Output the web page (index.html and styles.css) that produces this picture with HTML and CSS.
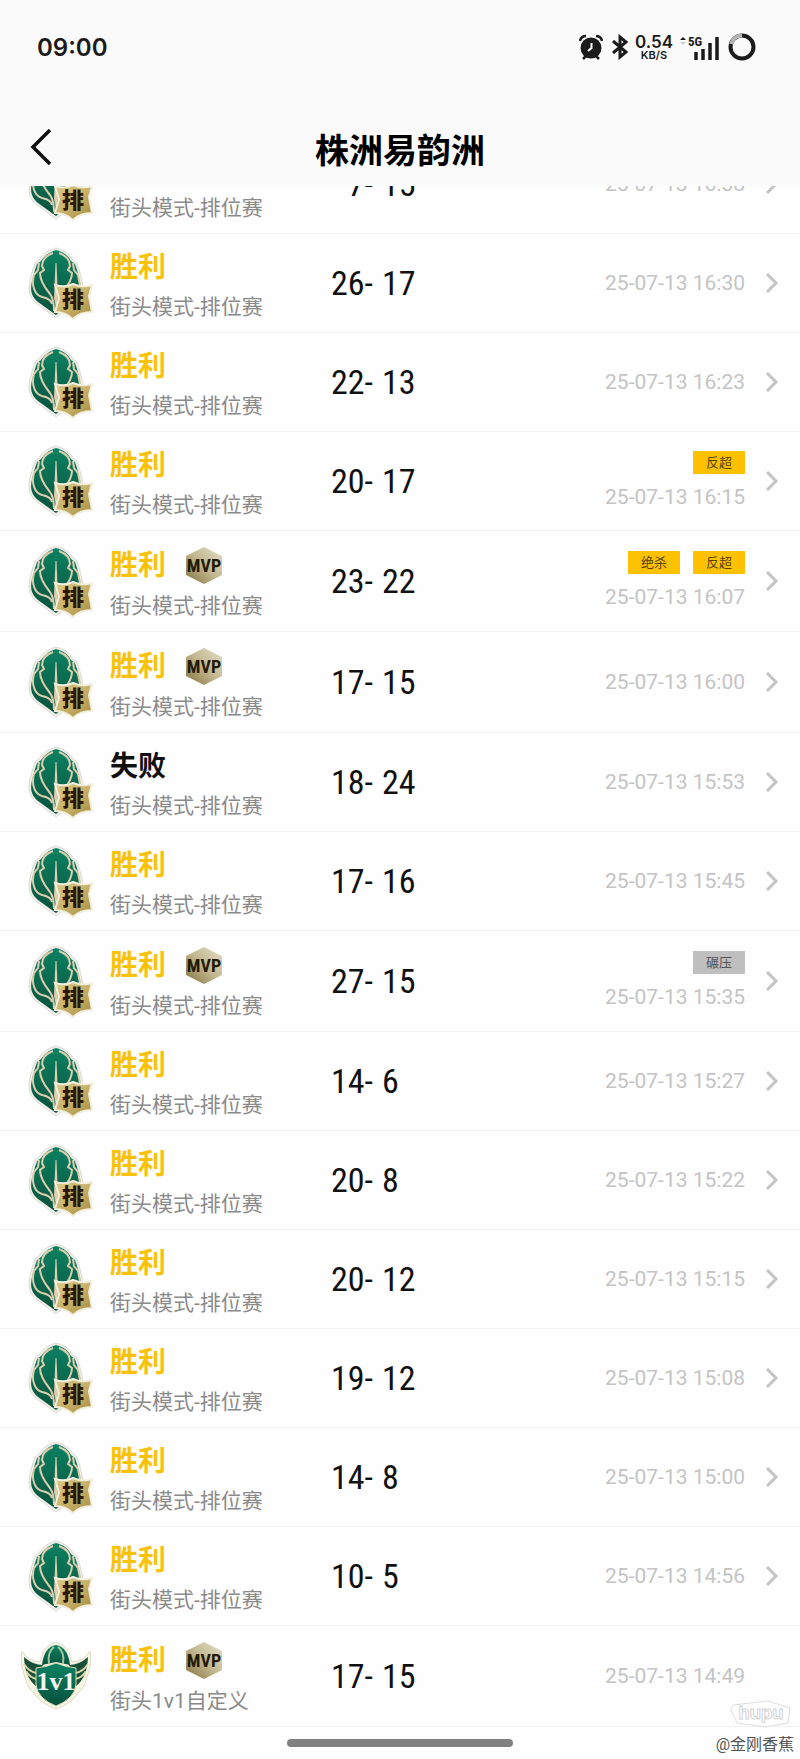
FILE: index.html
```html
<!DOCTYPE html>
<html lang="zh-CN">
<head>
<meta charset="utf-8">
<meta name="viewport" content="width=device-width, initial-scale=1">
<title>株洲易韵洲</title>
<link rel="stylesheet" href="styles.css">
</head>
<body>
<svg class="sprite" aria-hidden="true">
  <defs>
    <linearGradient id="gold" x1="0" y1="0" x2="1" y2="1">
      <stop offset="0" stop-color="#dccb8c"/><stop offset=".5" stop-color="#c9b269"/><stop offset="1" stop-color="#a38a3e"/>
    </linearGradient>
    <linearGradient id="medal" x1="0" y1="1" x2="1" y2="0">
      <stop offset="0" stop-color="#85713a"/><stop offset=".5" stop-color="#c2b78f"/><stop offset="1" stop-color="#e6e0cb"/>
    </linearGradient>
    <linearGradient id="green" x1="0" y1="0" x2="0" y2="1">
      <stop offset="0" stop-color="#0c8262"/><stop offset="1" stop-color="#07513c"/>
    </linearGradient>
    <symbol id="ranked" viewBox="0 0 74 74">
      <path d="M37 2C45 4 51 8 54 14L58 17 60 23 63 35C65 46 63 52 58 56L37 72 17 57C10 51 9 44 11 34L14 23 16 17 20 14C24 7 30 4 37 2Z" fill="#f0efe8" stroke="#dbdad3"/>
      <path d="M37 4C44 6 49 9 52 15L56 18 58 24 61 36C63 45 61 51 56 55L37 69 19 56C12 50 11 44 13 35L16 24 18 18 22 15C26 9 31 6 37 4Z" fill="url(#green)"/>
      <g fill="none" stroke="#dccdae" stroke-width="2">
        <path d="M34 7C26 10 23 15 23 20L25 24 21 27C21 36 27 43 31 48C34 52 35 58 35 65"/>
        <path d="M20 17L19 24 15 29C12 40 16 49 23 51C29 52 32 54 33 58"/>
        <path d="M40 7C48 10 51 15 51 20L49 24 53 27C53 34 48 41 44 46"/>
        <path d="M54 17L55 24 59 29L61 39"/>
      </g>
      <path d="M36.500 17L35 52L37 62L39 52L37.500 17Z" fill="#dccdae"/>
      <path d="M36 39Q46 42 54 38Q63 42 73 39L70 50 73 66Q61 66 54 73Q46 66 36 66L40 52Z" fill="url(#gold)" stroke="#f3efe0" stroke-width="2"/>
      <text x="54" y="61" class="ranked-text">排</text>
    </symbol>
    <symbol id="duel" viewBox="0 0 74 74">
      <path d="M37 3Q46 6 50 13L53 23Q64 23 71 12Q73 25 69 35Q65 50 60 53Q52 65 37 70Q22 65 14 53Q9 50 5 35Q1 25 3 12Q10 23 21 23L24 13Q28 6 37 3Z" fill="#f7f5e4" stroke="#dedbc6"/>
      <path d="M5 18Q14 26 24 26L22 31 17 29V47Q6 39 5 18ZM69 18Q60 26 50 26L52 31 57 29V47Q68 39 69 18Z" fill="#174f38"/>
      <path d="M5 25Q10 33 18 34M7 32Q11 39 18 40M69 25Q64 33 56 34M67 32Q63 39 56 40" fill="none" stroke="#ddd6a8" stroke-width="2"/>
      <path d="M23 26Q25 8 37 6Q49 8 51 26L37 23Z" fill="url(#green)"/>
      <path d="M30 25Q28 13 35 8M44 25Q46 13 39 8" fill="none" stroke="#a7c5a0" stroke-width="2"/>
      <path d="M17 29Q28 28 37 24Q46 28 57 29V46Q55 60 37 67Q19 60 17 46Z" fill="url(#green)" stroke="#ded8b2" stroke-width="1"/>
      <text x="37" y="51" class="duel-text">1v1</text>
    </symbol>
    <symbol id="mvp" viewBox="0 0 36 39">
      <path d="M18 1L36 10V29L18 38L0 29V10Z" fill="url(#medal)"/>
      <text x="18" y="26" class="mvp-text">MVP</text>
    </symbol>
    <symbol id="next" viewBox="0 0 14 20">
      <path d="M2 1L11 10L2 19" fill="none" stroke="#c4c4c4" stroke-width="3"/>
    </symbol>
  </defs>
</svg>

<header class="header">
  <div class="status">
    <time class="clock">09:00</time>
    <div class="indicators">
      <svg class="alarm" viewBox="0 0 24 26" aria-label="闹钟"><circle cx="12" cy="14" r="10.5" fill="#1b1b1b"/><path d="M1 7Q2 2 7 2M17 2Q22 2 23 7M7 22L4 25M17 22L20 25" fill="none" stroke="#1b1b1b" stroke-width="2.5"/><path d="M12.500 9V14L9 17" fill="none" stroke="#fff" stroke-width="2"/></svg>
      <svg class="bluetooth" viewBox="0 0 16 26" aria-label="蓝牙"><path d="M1 7L14 18L8 23V3L14 8L1 19" fill="none" stroke="#1b1b1b" stroke-width="3"/></svg>
      <div class="speed"><b>0.54</b><small>KB/S</small></div>
      <svg class="signal" viewBox="0 0 39 26" aria-label="5G"><path d="M0 6L3 3L6 6Z" fill="#1b1b1b"/><path d="M0 8H6L3 11Z" fill="#ccc"/><path d="M16 26V18M23 26V15M30 26V9M37 26V3" fill="none" stroke="#1b1b1b" stroke-width="3.500"/><text x="8" y="12" class="network">5G</text></svg>
      <svg class="battery" viewBox="0 0 28 28" aria-label="电量"><circle cx="14" cy="14" r="11.500" fill="none" stroke="#1b1b1b" stroke-width="4"/><path d="M3 11A11.500 11.500 0 0 1 14 2.500" fill="none" stroke="#b5b5b5" stroke-width="4"/></svg>
    </div>
  </div>
  <div class="nav">
    <button class="back" aria-label="返回"><svg viewBox="0 0 22 36"><path d="M20 1L3 18L20 35" fill="none" stroke="#111" stroke-width="3.500"/></svg></button>
    <h1>株洲易韵洲</h1>
  </div>
</header>

<main class="matches" id="matches"></main>

<div class="home-bar"></div>
<div class="watermark">
  <svg viewBox="0 0 62 28" aria-hidden="true"><path d="M3 5L38 1L60 8L58 23L36 27L7 23L1 10Z" fill="#fff" stroke="#ddd"/><text x="31" y="19" class="brand">hupu</text></svg>
  <span>@金刚香蕉</span>
</div>
<script src="matches.js"></script>
</body>
</html>
```
FILE: styles.css
```css
* { box-sizing: border-box; }

body {
  margin: 0;
  position: relative;
  min-height: 100vh;
  padding-bottom: 31px;
  overflow-x: hidden;
  background: #fefefe;
  color: #111;
  font-family: Roboto, "Noto Sans CJK SC", sans-serif;
}

.sprite { position: absolute; width: 0; height: 0; }

.header {
  position: sticky;
  top: 0;
  z-index: 1;
  height: 186px;
  background: #fafafa;
}

.status {
  display: flex;
  align-items: center;
  justify-content: space-between;
  height: 94px;
  padding: 0 44px 0 37px;
  color: #1b1b1b;
  font-family: Inter, sans-serif;
}

.clock { font-size: 24px; font-weight: 600; }

.indicators { display: flex; align-items: center; gap: 7px; }
.alarm { width: 24px; height: 26px; }
.bluetooth { width: 16px; height: 26px; margin-left: 2px; }
.speed { display: flex; flex-direction: column; align-items: center; }
.speed b { font-size: 17px; line-height: 16px; font-weight: 600; }
.speed small { font-size: 11px; line-height: 11px; font-weight: 600; }
.signal { width: 39px; height: 26px; }
.network { font: 700 13px "Liberation Sans Narrow", "Roboto Condensed", Roboto, sans-serif; fill: #1b1b1b; }
.battery { width: 28px; height: 28px; margin-left: 2px; }

.nav {
  display: grid;
  grid-template-columns: 100px 1fr 100px;
  align-items: center;
  height: 92px;
  padding-top: 22px;
}

.nav h1 {
  margin: 0;
  font-size: 34px;
  line-height: 36px;
  font-weight: 700;
  text-align: center;
  color: #000;
}

.back {
  width: 60px;
  height: 36px;
  margin: 0 0 8px 22px;
  padding: 0 8px;
  border: 0;
  background: none;
  text-align: left;
}

.back svg { width: 22px; height: 36px; }

.matches { overflow: hidden; }

.match {
  display: grid;
  grid-template-columns: 91px 219px 1fr auto 14px;
  align-items: center;
  padding: 0 21px 0 19px;
  border-bottom: 1px solid #f2f2f2;
}

.match:first-child { margin-top: -51px; }

.mode-icon { display: block; width: 74px; height: 74px; }
.ranked-text { font: 900 22px "Noto Sans CJK SC", sans-serif; fill: #2c180b; text-anchor: middle; }
.duel-text { font: 700 26px "Liberation Serif", serif; fill: #f2f5f0; text-anchor: middle; }

.info { padding: 17px 0 10px; }
.outcome { display: flex; align-items: center; gap: 20px; margin-bottom: 7px; }

.outcome h2 {
  margin: 0;
  font-size: 28px;
  line-height: 34px;
  font-weight: 700;
  color: #f9c20a;
}

.outcome .lost { color: #111; }
.medal { width: 36px; height: 39px; margin: -2px 0 -1px; }
.mvp-text { font: 700 18px "Liberation Sans Narrow", "Roboto Condensed", Roboto, sans-serif; fill: #241a08; text-anchor: middle; }

.mode {
  margin: 0;
  font-size: 21px;
  line-height: 30px;
  font-weight: 400;
  color: #8a8a8a;
}

.score {
  display: flex;
  gap: 9px;
  font-family: "Liberation Sans Narrow", "Roboto Condensed", Roboto, sans-serif;
  font-size: 34px;
  line-height: 36px;
}

.score span:first-child { min-width: 44px; text-align: right; }

.when {
  display: flex;
  flex-direction: column;
  align-items: flex-end;
  gap: 8px;
  padding: 18px 0;
  margin-right: 20px;
}

.tags { display: flex; gap: 13px; }

.tag {
  width: 52px;
  background: #fcc202;
  color: #57430a;
  font-size: 13px;
  line-height: 23px;
  text-align: center;
}

.tag-gray { background: #bfbfbf; color: #555; }

.when time {
  font-size: 21px;
  line-height: 30px;
  font-weight: 400;
  color: #c4c4c4;
}

.next { display: block; width: 14px; height: 20px; }

.home-bar {
  position: absolute;
  bottom: 12px;
  left: 50%;
  width: 226px;
  height: 8px;
  margin-left: -113px;
  border-radius: 4px;
  background: #808080;
}

.watermark {
  position: absolute;
  right: 6px;
  bottom: 4px;
  display: flex;
  flex-direction: column;
  align-items: flex-end;
  gap: 7px;
  font-size: 16px;
  line-height: 20px;
  color: #555;
}

.watermark svg { width: 62px; height: 28px; margin-right: 2px; }
.brand { font: 700 18px Inter, sans-serif; fill: #fff; stroke: #d4d4d4; text-anchor: middle; }
```
FILE: matches.js
```js
const matches = [
  { own: 7, other: 15, time: "16:38", won: true },
  { own: 26, other: 17, time: "16:30", won: true },
  { own: 22, other: 13, time: "16:23", won: true },
  { own: 20, other: 17, time: "16:15", won: true, tags: ["反超"] },
  { own: 23, other: 22, time: "16:07", won: true, mvp: true, tags: ["绝杀", "反超"] },
  { own: 17, other: 15, time: "16:00", won: true, mvp: true },
  { own: 18, other: 24, time: "15:53", won: false },
  { own: 17, other: 16, time: "15:45", won: true },
  { own: 27, other: 15, time: "15:35", won: true, mvp: true, tags: ["碾压"] },
  { own: 14, other: 6, time: "15:27", won: true },
  { own: 20, other: 8, time: "15:22", won: true },
  { own: 20, other: 12, time: "15:15", won: true },
  { own: 19, other: 12, time: "15:08", won: true },
  { own: 14, other: 8, time: "15:00", won: true },
  { own: 10, other: 5, time: "14:56", won: true },
  { own: 17, other: 15, time: "14:49", won: true, mvp: true, duel: true }
];

const renderTags = tags => `<div class="tags">${tags
  .map(tag => `<span class="tag${tag === "碾压" ? " tag-gray" : ""}">${tag}</span>`)
  .join("")}</div>`;

document.getElementById("matches").innerHTML = matches.map(match => `
  <article class="match">
    <svg class="mode-icon" aria-hidden="true"><use href="#${match.duel ? "duel" : "ranked"}"/></svg>
    <div class="info">
      <div class="outcome">
        <h2 class="${match.won ? "won" : "lost"}">${match.won ? "胜利" : "失败"}</h2>
        ${match.mvp ? '<svg class="medal" role="img" aria-label="MVP"><use href="#mvp"/></svg>' : ""}
      </div>
      <p class="mode">${match.duel ? "街头1v1自定义" : "街头模式-排位赛"}</p>
    </div>
    <div class="score"><span>${match.own}-</span><span>${match.other}</span></div>
    <div class="when">${match.tags ? renderTags(match.tags) : ""}<time>25-07-13 ${match.time}</time></div>
    ${match.duel ? "" : '<svg class="next" aria-hidden="true"><use href="#next"/></svg>'}
  </article>`).join("");
```
